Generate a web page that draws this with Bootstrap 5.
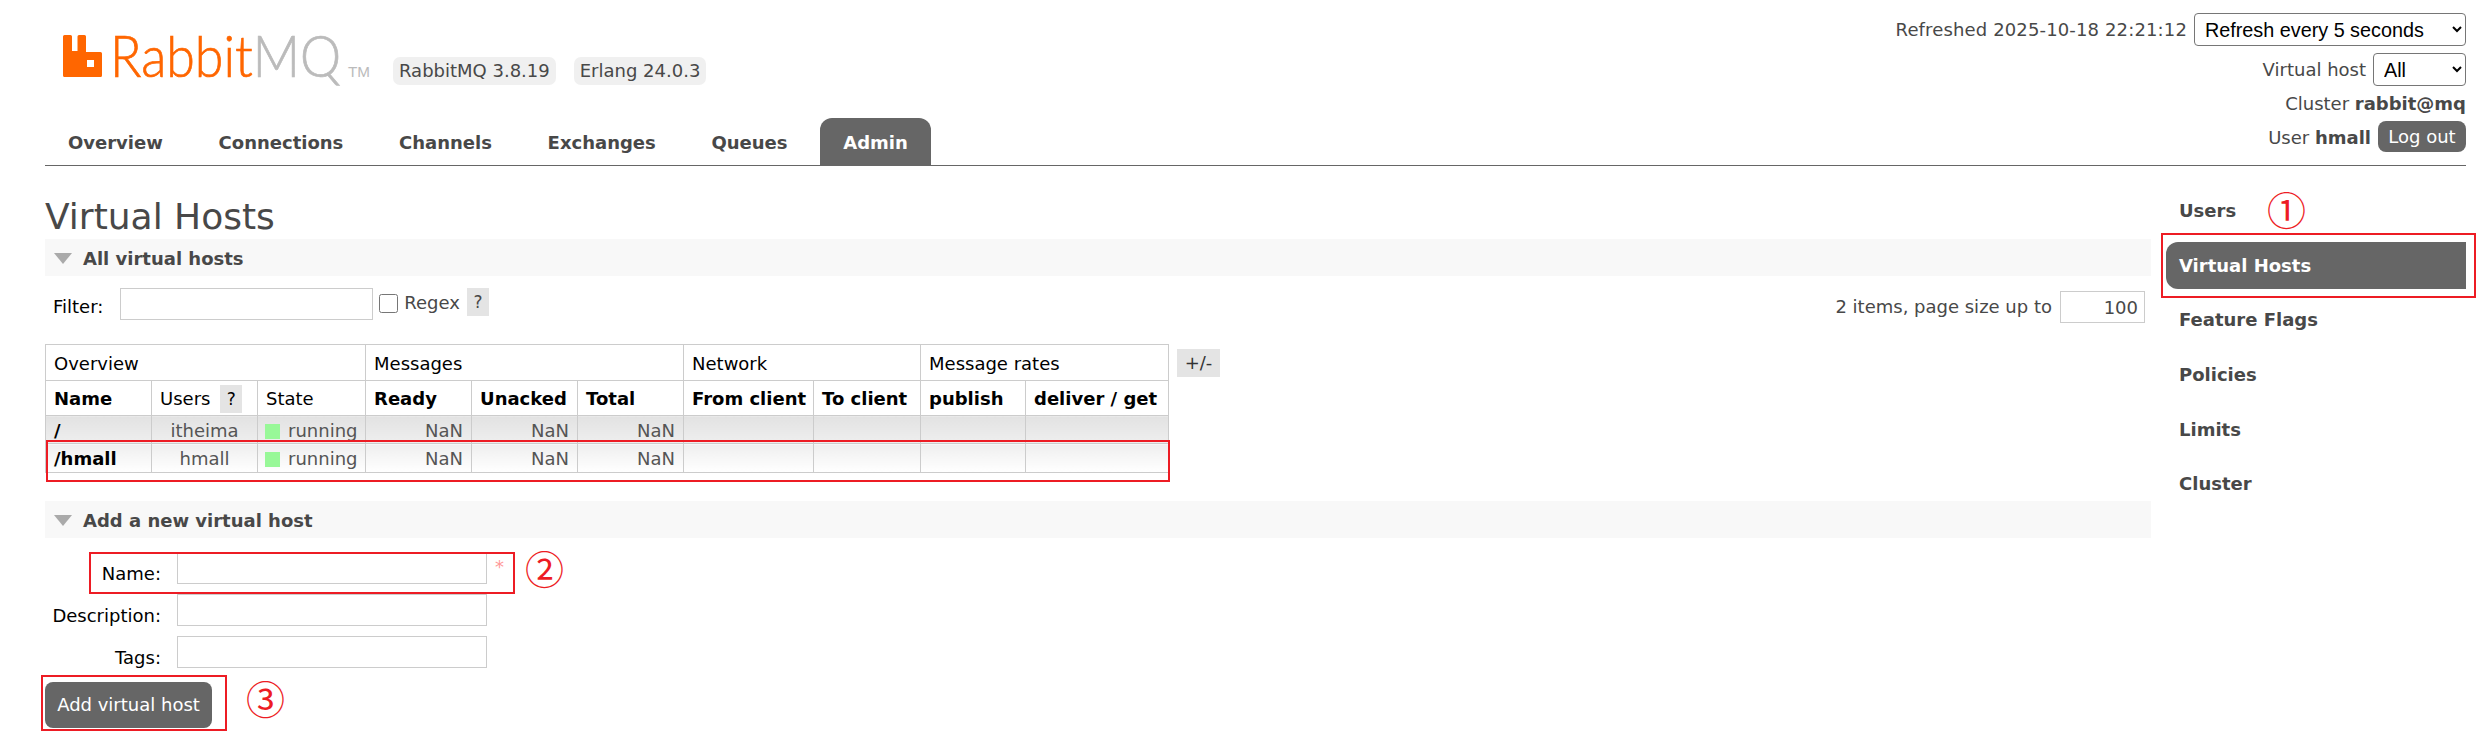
<!DOCTYPE html>
<html lang="en">
<head>
<meta charset="utf-8">
<title>RabbitMQ Management</title>
<link href="https://cdn.jsdelivr.net/npm/bootstrap@5.3.0/dist/css/bootstrap.min.css" rel="stylesheet">
<style>
:root{--ink:#484848;--tab:#666;--line:#ccc;--redline:#ed1c24}
body{font-family:"DejaVu Sans",Verdana,sans-serif;font-size:18px;color:var(--ink);background:#fff;line-height:1.3}
.pagewrap{position:relative;height:739px;overflow:hidden;padding:0 25px 0 45px}
.topbar{height:166px;border-bottom:1px solid var(--tab)}
.leftcol{width:1400px}
.logorow{height:118px;padding:15px 0 0 18px}
.logosvg{width:310px;height:80px;display:block;flex:none}
.logotxt{font-family:"Lato","Liberation Sans",sans-serif;font-weight:300;font-size:57px;stroke-width:.7px}
.logoorange{fill:#f60;stroke:#f60}
.logogray{fill:#bbb;stroke:#bbb}
.logomark{fill:#f60}
.logotm{font-family:"Liberation Sans",sans-serif;font-size:14px;fill:#bbb}
.verpill{background:#f0f0f0;border-radius:7px;height:28px;line-height:28px;padding:0 6px;margin-top:42px}
.verone{margin-left:20px;margin-right:18px}
.tabbar{height:47px}
.tabitem{display:block;padding:13px 23px 0;height:47px;font-weight:700;color:var(--ink);text-decoration:none;margin-right:9.7px;border-radius:12px 12px 0 0}
.tabon{background:var(--tab);color:#fff}
.rhs{text-align:right;padding-top:13px}
.rhsline{height:33px;gap:7px}
.rhsrefresh{letter-spacing:.14px}
.rhsgap{margin-top:7px}
.rhsclu{padding-top:3px}
.rhsuser{align-items:flex-end}
.rhsuser span{padding-bottom:3px}
.rhsselect{font-family:"Liberation Sans",sans-serif;font-size:19.8px;letter-spacing:0;height:33px;border:1px solid #767676;border-radius:4px;background:#fff;color:#000;padding:0 0 0 6px}
.selwide{width:272px}
.selnarrow{width:93px}
.btngray{background:var(--tab);color:#fff;border:0;border-radius:8px}
.btnout{height:31px;width:88px;padding:0}
.mainrow{padding-top:21px}
.maincol{width:2106px;flex:none}
.pagetitle{font-size:36px;font-weight:400;line-height:44px;padding-top:8px;margin:0;color:var(--ink)}
.sechead{background:#f8f8f8;height:37px;line-height:37px;font-weight:700;padding:1px 0 0 9px;color:var(--ink)}
.sectri{width:0;height:0;border-left:9px solid transparent;border-right:9px solid transparent;border-top:11px solid #aaa;margin-right:11px}
.filterrow{height:68px;padding:12px 6px 0 8px}
.lblblack{color:#000;margin-top:7px}
.plaininput{border:1px solid var(--line);background:#fff;height:32px;padding:0 6px;color:var(--ink)}
.filterinput{width:253px;margin-left:17px}
.regexbox{width:19px;height:19px;margin:6px 6px 0;appearance:auto}
.regexlbl{margin-top:3px;margin-right:7px}
.helpbox{background:#e4e4e4;display:inline-block;width:22px;height:28px;line-height:28px;text-align:center;font-size:17px}
.pagesize{width:85px;text-align:right;margin-left:8px}
.pagegrp{margin-top:3px}
.vhosttable{border-collapse:collapse;table-layout:fixed;width:1123px;margin:0}
.vhosttable td,.vhosttable th{border:1px solid var(--line);padding:2px 8px 0;vertical-align:middle;white-space:nowrap;overflow:hidden}
.vhosttable .grouprow{height:36px}
.vhosttable .grouprow th{font-weight:400;color:#000}
.vhosttable .headrow{height:35px}
.vhosttable .headrow th{color:#000;font-weight:700}
.vhosttable .headrow th.headplain{font-weight:400}
.vhosttable .rowa{height:28px}
.vhosttable .rowb{height:29px}
.vhosttable .rowa td{background:linear-gradient(#e2e2e2,#efefef)}
.vhosttable .rowb td{background:linear-gradient(#efefef,#fff)}
.vhosttable td.cellname{color:#000;font-weight:700}
.vhosttable td.cellval{text-align:right;color:#555}
.vhosttable td.cellmid{text-align:center;color:#555}
.vhosttable td.cellstate{color:#555;padding-left:7px}
.statedot{display:inline-block;width:15px;height:15px;background:#98f898;margin-right:8px;vertical-align:-2px}
.colone{width:106px}.coltwo{width:106px}.colthree{width:108px}.colfour{width:106px}.colfive{width:106px}.colsix{width:106px}
.colseven{width:130px}.coleight{width:107px}.colnine{width:105px}.colten{width:143px}
.plusbox{background:#e4e4e4;width:43px;height:28px;line-height:28px;text-align:center;margin:5px 0 0 8px;color:#333}
.tablewrap{height:129px}
.addsec{margin-top:28px}
.formlist{padding-top:14px}
.formline{height:42px}
.formlbl{width:116px;text-align:right;color:#000;margin-top:10px}
.forminput{width:310px;height:32px;margin-left:16px}
.reqmark{color:#f99;margin:3px 0 0 8px;font-size:18px}
.addbtn{width:167px;height:46px;margin-top:4px;display:block;padding:0}
.sidecol{width:300px;margin-left:15px;flex:none}
.sideitem{display:block;height:47px;line-height:47px;margin-bottom:7.7px;padding-left:13px;font-weight:700;color:var(--ink);text-decoration:none;border-radius:12px 0 0 12px}
.sideon{background:var(--tab);color:#fff}
.redmark{position:absolute;border:2px solid var(--redline);pointer-events:none}
.redone{left:2161px;top:233px;width:315px;height:65px}
.redtwo{left:46px;top:440px;width:1124px;height:42px}
.redthree{left:89px;top:552px;width:426px;height:42px}
.redfour{left:41px;top:675px;width:186px;height:56px}
.circlenum{position:absolute;color:var(--redline);font-family:"Noto Sans CJK SC",sans-serif;font-size:39px;line-height:39px}
.circleone{left:2267px;top:189px}
.circletwo{left:525px;top:548px}
.circlethree{left:246px;top:678px}
</style>
</head>
<body>
<div class="pagewrap">
  <header class="topbar d-flex justify-content-between">
    <div class="leftcol">
      <div class="logorow d-flex align-items-start">
        <svg class="logosvg" viewBox="0 -20 310 80" role="img" aria-label="RabbitMQ">
          <path class="logomark" d="M1.500 0H7.500A1.500 1.500 0 0 1 9 1.500V16H14.500V1.500A1.500 1.500 0 0 1 16 0H21.500A1.500 1.500 0 0 1 23 1.500V17H37.500A1.500 1.500 0 0 1 39 18.500V40.500A1.500 1.500 0 0 1 37.500 42H1.500A1.500 1.500 0 0 1 0 40.500V1.500A1.500 1.500 0 0 1 1.500 0ZM24 25V32H31V25Z"/>
          <text class="logotxt logoorange" x="47" y="42" textLength="231" lengthAdjust="spacingAndGlyphs">Rabbit<tspan class="logogray">MQ</tspan></text>
          <text class="logotm" x="285" y="42" textLength="22" lengthAdjust="spacingAndGlyphs">TM</text>
        </svg>
        <span class="verpill verone">RabbitMQ 3.8.19</span>
        <span class="verpill">Erlang 24.0.3</span>
      </div>
      <nav class="tabbar d-flex">
        <a class="tabitem" href="#">Overview</a>
        <a class="tabitem" href="#">Connections</a>
        <a class="tabitem" href="#">Channels</a>
        <a class="tabitem" href="#">Exchanges</a>
        <a class="tabitem" href="#">Queues</a>
        <a class="tabitem tabon" href="#">Admin</a>
      </nav>
    </div>
    <div class="rhs">
      <div class="rhsline d-flex justify-content-end align-items-center"><span class="rhsrefresh">Refreshed 2025-10-18 22:21:12</span>
        <select class="rhsselect selwide"><option>Refresh every 5 seconds</option></select></div>
      <div class="rhsline rhsgap d-flex justify-content-end align-items-center">Virtual host
        <select class="rhsselect selnarrow"><option>All</option></select></div>
      <div class="rhsline rhsclu d-flex justify-content-end align-items-center"><span>Cluster <b>rabbit@mq</b></span></div>
      <div class="rhsline rhsuser d-flex justify-content-end"><span>User <b>hmall</b></span>
        <button class="btngray btnout" type="button">Log out</button></div>
    </div>
  </header>

  <div class="mainrow d-flex">
    <main class="maincol">
      <h1 class="pagetitle">Virtual Hosts</h1>
      <section>
        <div class="sechead d-flex align-items-center"><span class="sectri"></span>All virtual hosts</div>
        <div class="filterrow d-flex align-items-start justify-content-between">
          <div class="d-flex align-items-start">
            <span class="lblblack">Filter:</span>
            <input class="plaininput filterinput" type="text">
            <input class="regexbox" type="checkbox">
            <span class="regexlbl">Regex</span>
            <span class="helpbox">?</span>
          </div>
          <div class="d-flex align-items-center pagegrp">
            <span>2 items, page size up to</span>
            <input class="plaininput pagesize" type="text" value="100">
          </div>
        </div>
        <div class="tablewrap d-flex align-items-start">
          <table class="vhosttable">
            <colgroup><col class="colone"><col class="coltwo"><col class="colthree"><col class="colfour"><col class="colfive"><col class="colsix"><col class="colseven"><col class="coleight"><col class="colnine"><col class="colten"></colgroup>
            <thead>
              <tr class="grouprow"><th colspan="3">Overview</th><th colspan="3">Messages</th><th colspan="2">Network</th><th colspan="2">Message rates</th></tr>
              <tr class="headrow"><th>Name</th><th class="headplain">Users <span class="helpbox ms-1">?</span></th><th class="headplain">State</th><th>Ready</th><th>Unacked</th><th>Total</th><th>From client</th><th>To client</th><th>publish</th><th>deliver / get</th></tr>
            </thead>
            <tbody>
              <tr class="rowa"><td class="cellname">/</td><td class="cellmid">itheima</td><td class="cellstate"><span class="statedot"></span>running</td><td class="cellval">NaN</td><td class="cellval">NaN</td><td class="cellval">NaN</td><td></td><td></td><td></td><td></td></tr>
              <tr class="rowb"><td class="cellname">/hmall</td><td class="cellmid">hmall</td><td class="cellstate"><span class="statedot"></span>running</td><td class="cellval">NaN</td><td class="cellval">NaN</td><td class="cellval">NaN</td><td></td><td></td><td></td><td></td></tr>
            </tbody>
          </table>
          <div class="plusbox">+/-</div>
        </div>
      </section>
      <section class="addsec">
        <div class="sechead d-flex align-items-center"><span class="sectri"></span>Add a new virtual host</div>
        <form class="formlist">
          <div class="formline d-flex align-items-start"><label class="formlbl">Name:</label><input class="plaininput forminput" type="text"><span class="reqmark">*</span></div>
          <div class="formline d-flex align-items-start"><label class="formlbl">Description:</label><input class="plaininput forminput" type="text"></div>
          <div class="formline d-flex align-items-start"><label class="formlbl">Tags:</label><input class="plaininput forminput" type="text"></div>
          <button class="btngray addbtn" type="button">Add virtual host</button>
        </form>
      </section>
    </main>
    <aside class="sidecol">
      <a class="sideitem" href="#">Users</a>
      <a class="sideitem sideon" href="#">Virtual Hosts</a>
      <a class="sideitem" href="#">Feature Flags</a>
      <a class="sideitem" href="#">Policies</a>
      <a class="sideitem" href="#">Limits</a>
      <a class="sideitem" href="#">Cluster</a>
    </aside>
  </div>

  <div class="redmark redone"></div>
  <div class="redmark redtwo"></div>
  <div class="redmark redthree"></div>
  <div class="redmark redfour"></div>
  <div class="circlenum circleone">①</div>
  <div class="circlenum circletwo">②</div>
  <div class="circlenum circlethree">③</div>
</div>
<script src="https://cdn.jsdelivr.net/npm/bootstrap@5.3.0/dist/js/bootstrap.bundle.min.js"></script>
</body>
</html>
